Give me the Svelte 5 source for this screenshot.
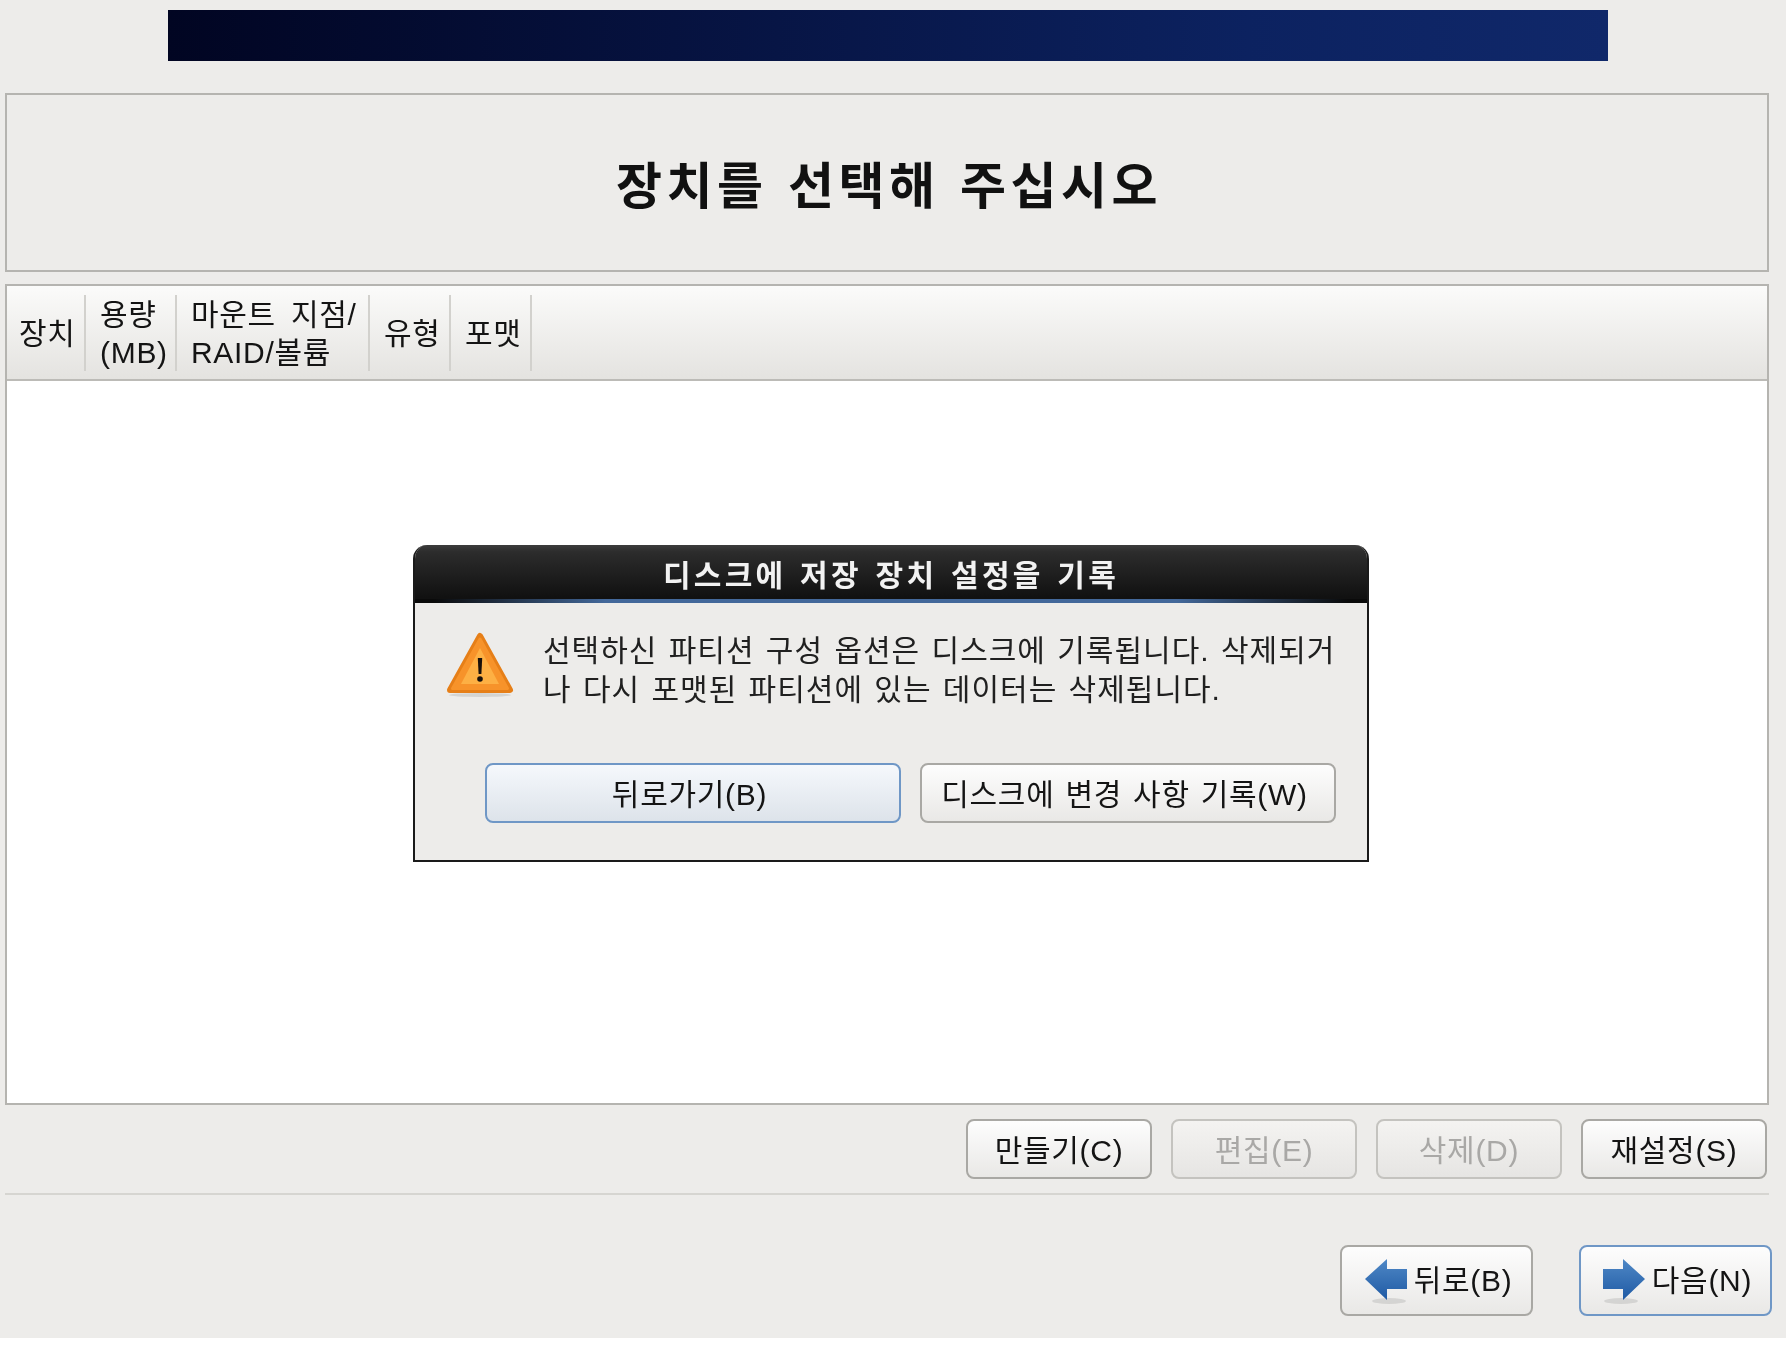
<script>
	const columns = [
		{ label: ['장치'], width: 79 },
		{ label: ['용량', '(MB)'], width: 91 },
		{ label: ['마운트 지점/', 'RAID/볼륨'], width: 193 },
		{ label: ['유형'], width: 81 },
		{ label: ['포맷'], width: 81 }
	]
	const tools = [
		{ label: '만들기(C)' },
		{ label: '편집(E)', disabled: true },
		{ label: '삭제(D)', disabled: true },
		{ label: '재설정(S)' }
	]
</script>

<div class="page">
	<div class="banner"></div>

	<div class="title-box">
		<h1>장치를 선택해 주십시오</h1>
	</div>

	<div class="table-box">
		<div class="thead">
			{#each columns as col}
				<div class="th" style="width: {col.width}px">
					{#each col.label as line}
						<span>{line}</span>
					{/each}
				</div>
			{/each}
		</div>
		<div class="tbody">
			<div class="dialog">
				<div class="dialog-title">디스크에 저장 장치 설정을 기록</div>
				<div class="dialog-body">
					<div class="message">
						<svg class="warn" width="70" height="68" viewBox="0 0 70 68">
							<ellipse cx="34" cy="65" rx="31" ry="2" fill="#000" opacity="0.1" />
							<path d="M34 6 L64 60 H4 Z" fill="#e67f18" stroke="#e67f18" stroke-width="6" stroke-linejoin="round" />
							<path d="M34 9 L61.5 58.5 H6.5 Z" fill="#f7932a" stroke="#f7932a" stroke-width="3" stroke-linejoin="round" />
							<path d="M34 18 L53 54 H15 Z" fill="#fdb044" />
							<path d="M31.8 28 h4.4 l-0.8 16 h-2.8 Z" fill="#17100a" />
							<circle cx="34" cy="49" r="2.8" fill="#17100a" />
						</svg>
						<p>선택하신 파티션 구성 옵션은 디스크에 기록됩니다. 삭제되거<br>나 다시 포맷된 파티션에 있는 데이터는 삭제됩니다.</p>
					</div>
					<div class="dialog-actions">
						<button class="btn focus">뒤로가기(B)</button>
						<button class="btn">디스크에 변경 사항 기록(W)</button>
					</div>
				</div>
			</div>
		</div>
	</div>

	<div class="tools">
		{#each tools as tool}
			<button class="btn tool" disabled={tool.disabled}>{tool.label}</button>
		{/each}
	</div>

	<hr>

	<div class="nav">
		<button class="btn nav-btn">
			<svg width="42" height="46" viewBox="0 0 42 46">
				<defs>
					<linearGradient id="arrowfill" x1="0" y1="0" x2="0" y2="1">
						<stop offset="0" stop-color="#4f88c6" />
						<stop offset="1" stop-color="#1f5aa4" />
					</linearGradient>
				</defs>
				<ellipse cx="24" cy="42" rx="17" ry="3" fill="#000" opacity="0.1" />
				<path d="M0 20 L22 0 V10 H42 V30 H22 V41 Z" fill="url(#arrowfill)" />
			</svg>
			<span>뒤로(B)</span>
		</button>
		<button class="btn nav-btn focus">
			<svg width="42" height="46" viewBox="0 0 42 46">
				<defs>
					<linearGradient id="arrowfill2" x1="0" y1="0" x2="0" y2="1">
						<stop offset="0" stop-color="#4f88c6" />
						<stop offset="1" stop-color="#1f5aa4" />
					</linearGradient>
				</defs>
				<ellipse cx="18" cy="42" rx="17" ry="3" fill="#000" opacity="0.1" />
				<path d="M42 20 L20 0 V10 H0 V30 H20 V41 Z" fill="url(#arrowfill2)" />
			</svg>
			<span>다음(N)</span>
		</button>
	</div>
</div>

<style>
:global(body) {
	margin: 0;
	background: #fff;
}
* {
	box-sizing: border-box;
}
.page {
	height: 1338px;
	background: #edecea;
	padding: 10px 17px 0 5px;
	font-family: "Liberation Sans", "Noto Sans CJK KR", sans-serif;
	font-size: 30px;
	letter-spacing: 0.7px;
	word-spacing: 2px;
	color: #141414;
	display: flex;
	flex-direction: column;
	filter: blur(0.6px);
}
.banner {
	width: 1440px;
	height: 51px;
	margin-left: 163px;
	flex: none;
	background: linear-gradient(90deg, #010522 0%, #06123f 35%, #0c2260 75%, #10286a 100%);
}
.title-box {
	height: 179px;
	margin-top: 32px;
	padding: 0 0 2px 4px;
	border: 2px solid #b5b4b0;
	display: flex;
	align-items: center;
	justify-content: center;
	flex: none;
}
h1 {
	margin: 0;
	font-size: 50px;
	font-weight: 700;
	letter-spacing: 4.5px;
	color: #111;
}
.table-box {
	margin-top: 12px;
	height: 821px;
	flex: none;
	border: 2px solid #b5b4b0;
	display: flex;
	flex-direction: column;
	background: #fff;
}
.thead {
	height: 95px;
	flex: none;
	display: flex;
	align-items: center;
	background: linear-gradient(#fbfbfa, #e4e3e0);
	border-bottom: 2px solid #bcbbb7;
}
.th {
	height: 76px;
	padding: 2px 0 0 14px;
	border-right: 2px solid #d2d1cd;
	display: flex;
	flex-direction: column;
	justify-content: center;
	line-height: 38px;
	white-space: nowrap;
	word-spacing: 6px;
}
.th:first-child {
	padding-left: 12px;
}
.tbody {
	flex: 1;
	position: relative;
}
.dialog {
	position: absolute;
	left: 406px;
	top: 164px;
	width: 956px;
	height: 317px;
	border: 2px solid #1a1a1a;
	border-top: none;
	border-radius: 14px 14px 0 0;
	background: #edecea;
	overflow: hidden;
}
.dialog-title {
	height: 58px;
	background:
		linear-gradient(90deg, #0a0a0a 2%, #43689a 20%, #43689a 80%, #0a0a0a 98%) bottom / 100% 4px no-repeat,
		linear-gradient(#3c3c3c 0, #2c2c2c 12%, #111 90%);
	color: #f2f2f2;
	font-size: 30px;
	font-weight: 700;
	letter-spacing: 3.3px;
	text-align: center;
	line-height: 61px;
}
.dialog-body {
	padding: 0 30px 0 31px;
}
.message {
	display: flex;
	padding-top: 28px;
	height: 160px;
}
.warn {
	flex: none;
	margin-right: 27px;
	margin-top: -1px;
}
.message p {
	margin: 0;
	line-height: 39px;
	white-space: nowrap;
	letter-spacing: 1px;
	color: #202020;
}
.dialog-actions {
	display: flex;
	gap: 19px;
	padding-left: 39px;
}
.btn {
	font: inherit;
	letter-spacing: inherit;
	word-spacing: inherit;
	color: #141414;
	height: 60px;
	border: 2px solid #a9a8a4;
	border-radius: 8px;
	background: linear-gradient(#fdfdfd, #e9e8e6);
	padding: 0 0 3px;
	white-space: nowrap;
}
.dialog-actions .btn {
	width: 416px;
	padding-right: 7px;
}
.btn.focus {
	border-color: #6f97c6;
	background: linear-gradient(#f5f8fc, #dde3ea);
}
.tools {
	display: flex;
	justify-content: flex-end;
	gap: 19px;
	margin-top: 14px;
	padding-right: 2px;
}
.tool {
	width: 186px;
}
.tool:disabled {
	color: #a9a8a6;
	border-color: #c4c3bf;
	background: linear-gradient(#f4f3f1, #e6e5e3);
}
hr {
	margin: 14px 0 0 0;
	border: none;
	height: 2px;
	background: #d6d5d1;
}
.nav {
	display: flex;
	justify-content: flex-end;
	gap: 46px;
	margin-top: 50px;
	margin-right: -3px;
}
.nav-btn {
	width: 193px;
	height: 71px;
	padding: 0 0 0 4px;
	display: flex;
	align-items: center;
	justify-content: center;
	gap: 7px;
}
.nav-btn.focus {
	background: linear-gradient(#fdfdfd, #e9e8e6);
}
.nav-btn svg {
	margin-top: 2px;
}
.nav-btn span {
	margin-bottom: 5px;
}
</style>
